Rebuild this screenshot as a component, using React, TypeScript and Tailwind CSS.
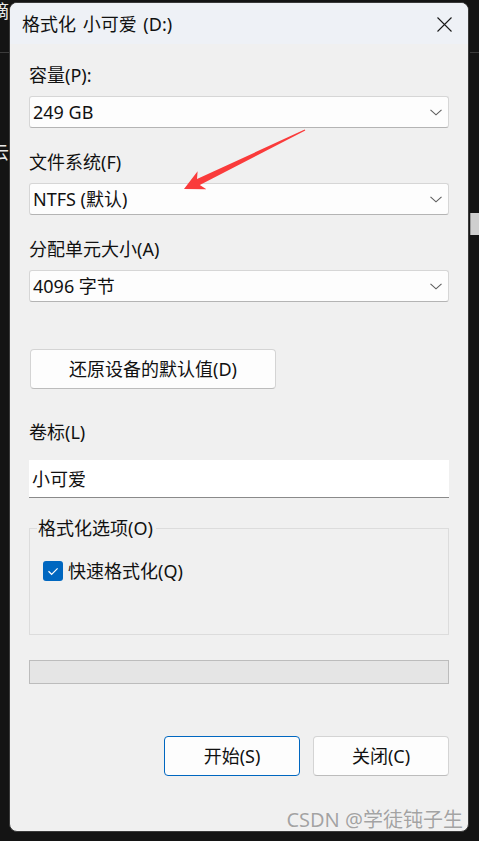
import React from 'react';

const Chevron = () => (
  <svg width="12" height="7" viewBox="0 0 12 7" fill="none">
    <path d="M0.5 0.8 L6 5.8 L11.5 0.8" stroke="#5c5c5c" strokeWidth="1.1" />
  </svg>
);

const Select = ({ value }: { value: string }) => (
  <div className="mt-[9px] h-[32px] flex items-center justify-between rounded-[3px] border border-[#d6d6d6] border-b-[#b4b4b4] bg-[#fdfdfd] pl-[3px] pr-[6px]">
    <span className="text-[18px] leading-[24px] text-[#111]">{value}</span>
    <Chevron />
  </div>
);

const Label = ({ text, mt }: { text: string; mt: string }) => (
  <div className={`${mt} text-[18px] leading-[24px] text-[#111]`}>{text}</div>
);

export default function App() {
  return (
    <div className="relative w-[479px] h-[841px] overflow-hidden bg-[#141414] font-['Noto_Sans','Noto_Sans_CJK_SC',sans-serif]">
      {/* what's left of the window behind */}
      <span className="absolute left-[-9px] top-[-1px] text-[18px] leading-[24px] text-[#e8e8e8]">摘</span>
      <span className="absolute left-[-9px] top-[140px] text-[18px] leading-[24px] text-[#e8e8e8]">云</span>
      <div className="absolute left-0 top-[52px] w-[9px] h-[1px] bg-[#3c3c3c]" />
      <div className="absolute right-0 top-[52px] w-[9px] h-[1px] bg-[#3c3c3c]" />
      <div className="absolute right-0 top-[213px] w-[9px] h-[22px] bg-[#cfcfcf] border-l border-[#9a9a9a]" />

      <div className="pt-[2px] pl-[9px]">
        <div className="relative w-[460px] h-[830px] rounded-[8px] border border-[#3a3a3a] bg-[#f0f0f0] overflow-hidden">
          {/* title bar */}
          <div className="h-[41px] flex items-center justify-between bg-[#eef1f6] pl-[12px] pr-[16px] pt-[1px]">
            <span className="text-[18px] leading-[24px] text-[#111] [word-spacing:2px]">格式化 小可爱 (D:)</span>
            <svg width="15" height="15" viewBox="0 0 15 15">
              <path d="M0.5 0.5 L14.5 14.5 M14.5 0.5 L0.5 14.5" stroke="#1a1a1a" strokeWidth="1.1" />
            </svg>
          </div>

          <div className="flex flex-col px-[19px]">
            <Label text="容量(P):" mt="mt-[19px]" />
            <Select value="249 GB" />
            <Label text="文件系统(F)" mt="mt-[22px]" />
            <Select value="NTFS (默认)" />
            <Label text="分配单元大小(A)" mt="mt-[22px]" />
            <Select value="4096 字节" />

            <button className="mt-[47px] ml-[1px] w-[246px] h-[40px] rounded-[4px] border border-[#d4d4d4] border-b-[#bcbcbc] bg-[#fdfdfd] text-[18px] leading-[24px] text-[#111]">
              还原设备的默认值(D)
            </button>

            <Label text="卷标(L)" mt="mt-[31px]" />
            <div className="mt-[16px] h-[38px] flex items-center bg-white border-b border-[#8a8a8a] pl-[3px]">
              <span className="text-[18px] leading-[24px] text-[#111]">小可爱</span>
            </div>

            {/* options group */}
            <div className="relative mt-[30px] h-[107px] border border-[#dcdcdc]">
              <span className="absolute left-[7px] top-[-13px] bg-[#f0f0f0] pl-[1px] pr-[3px] text-[18px] leading-[24px] text-[#111]">
                格式化选项(O)
              </span>
              <div className="mt-[32px] ml-[13px] h-[20px] flex items-center gap-[5px]">
                <div className="w-[20px] h-[20px] rounded-[3px] bg-[#0067c0] flex items-center justify-center">
                  <svg width="20" height="20" viewBox="0 0 20 20" fill="none">
                    <path d="M5.5 10.3 L8.6 13.3 L14.6 7.3" stroke="#fff" strokeWidth="1.2" />
                  </svg>
                </div>
                <span className="text-[18px] leading-[24px] text-[#111]">快速格式化(Q)</span>
              </div>
            </div>

            {/* progress */}
            <div className="mt-[25px] h-[24px] border border-[#bcbcbc] bg-[#e5e5e5]" />

            <div className="mt-[52px] flex justify-end gap-[13px]">
              <button className="w-[136px] h-[40px] rounded-[4px] border border-[#0067c0] bg-[#fdfdfd] text-[18px] leading-[24px] text-[#111]">
                开始(S)
              </button>
              <button className="w-[136px] h-[40px] rounded-[4px] border border-[#d4d4d4] border-b-[#bcbcbc] bg-[#fdfdfd] text-[18px] leading-[24px] text-[#111]">
                关闭(C)
              </button>
            </div>
          </div>
        </div>
      </div>

      {/* red annotation arrow */}
      <svg className="absolute left-0 top-0 pointer-events-none" width="479" height="841">
        <polygon
          points="305.3,130.5 199.8,184.9 206.4,189.2 184,189 197.6,171.2 197.0,179.1 304.7,129.5"
          fill="#fa3b3b"
        />
      </svg>

      <span className="absolute right-[16px] top-[806px] text-[20px] leading-[28px] text-[#a3a3a3] [text-shadow:0_0_1px_#ffffff]">
        CSDN @学徒钝子生
      </span>
    </div>
  );
}
